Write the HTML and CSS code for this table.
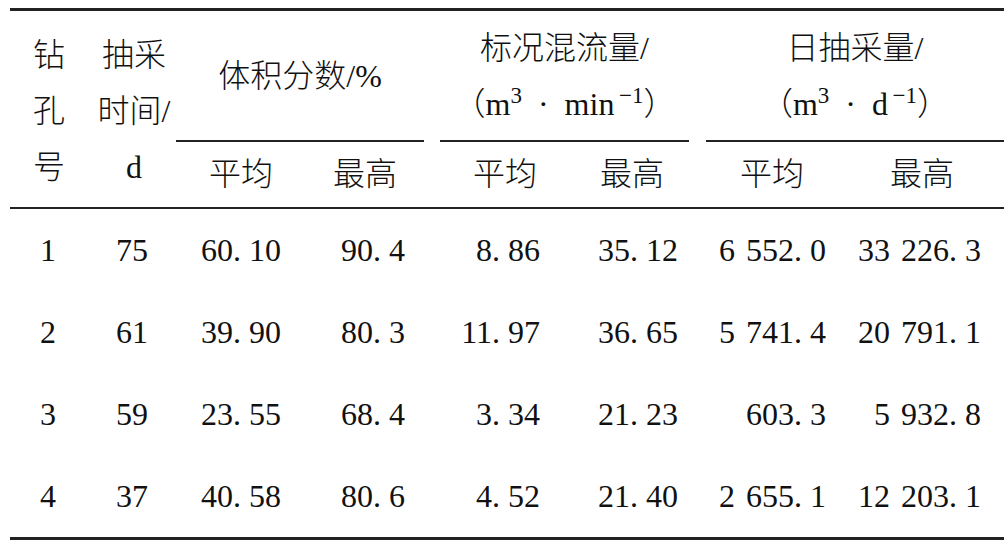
FILE: index.html
```html
<!DOCTYPE html>
<html lang="zh-CN">
<head>
<meta charset="utf-8">
<title>钻孔抽采数据</title>
<link rel="stylesheet" href="styles.css">
</head>
<body>
<table class="data">
  <colgroup>
    <col class="w1"><col class="w2"><col class="w3"><col class="w4">
    <col class="w5"><col class="w6"><col class="w7"><col class="w8">
  </colgroup>
  <thead>
    <tr>
      <th rowspan="2" class="stack">钻<br>孔<br>号</th>
      <th rowspan="2" class="stack stack-2">抽采<br>时间/<br>d</th>
      <th colspan="2" class="group"><div class="glabel g-first"><span>体积分数/<span class="pct">%</span></span></div></th>
      <th colspan="2" class="group"><div class="glabel g-mid"><span>标况混流量/</span><span class="unit">（m<sup>3</sup> · min<sup class="neg">−1</sup>）</span></div></th>
      <th colspan="2" class="group"><div class="glabel g-last"><span>日抽采量/</span><span class="unit">（m<sup>3</sup> · d<sup class="neg">−1</sup>）</span></div></th>
    </tr>
    <tr>
      <th class="sub s3">平均</th>
      <th class="sub s4">最高</th>
      <th class="sub s5">平均</th>
      <th class="sub s6">最高</th>
      <th class="sub s7">平均</th>
      <th class="sub s8">最高</th>
    </tr>
  </thead>
  <tbody>
    <tr>
      <td class="c1">1</td><td class="c2">75</td>
      <td class="c3">60<span class="pt">.</span>10</td><td class="c4">90<span class="pt">.</span>4</td>
      <td class="c5">8<span class="pt">.</span>86</td><td class="c6">35<span class="pt">.</span>12</td>
      <td class="c7">6 552<span class="pt">.</span>0</td><td class="c8">33 226<span class="pt">.</span>3</td>
    </tr>
    <tr>
      <td class="c1">2</td><td class="c2">61</td>
      <td class="c3">39<span class="pt">.</span>90</td><td class="c4">80<span class="pt">.</span>3</td>
      <td class="c5">11<span class="pt">.</span>97</td><td class="c6">36<span class="pt">.</span>65</td>
      <td class="c7">5 741<span class="pt">.</span>4</td><td class="c8">20 791<span class="pt">.</span>1</td>
    </tr>
    <tr>
      <td class="c1">3</td><td class="c2">59</td>
      <td class="c3">23<span class="pt">.</span>55</td><td class="c4">68<span class="pt">.</span>4</td>
      <td class="c5">3<span class="pt">.</span>34</td><td class="c6">21<span class="pt">.</span>23</td>
      <td class="c7">603<span class="pt">.</span>3</td><td class="c8">5 932<span class="pt">.</span>8</td>
    </tr>
    <tr>
      <td class="c1">4</td><td class="c2">37</td>
      <td class="c3">40<span class="pt">.</span>58</td><td class="c4">80<span class="pt">.</span>6</td>
      <td class="c5">4<span class="pt">.</span>52</td><td class="c6">21<span class="pt">.</span>40</td>
      <td class="c7">2 655<span class="pt">.</span>1</td><td class="c8">12 203<span class="pt">.</span>1</td>
    </tr>
  </tbody>
</table>
</body>
</html>
```

FILE: styles.css
```css
html, body {
  margin: 0;
  padding: 0;
  background: #ffffff;
}

body {
  padding-top: 8px;
  padding-left: 10px;
}

.data {
  width: 994px;
  table-layout: fixed;
  border-collapse: separate;
  border-spacing: 0;
  border-top: 3px solid #222;
  border-bottom: 3px solid #222;
  font-family: "Liberation Serif", "Noto Sans CJK SC", serif;
  font-size: 32px;
  font-weight: 300;
  color: #111;
}

.w1 { width: 82px; }
.w2 { width: 84px; }
.w3 { width: 126px; }
.w4 { width: 130px; }
.w5 { width: 130px; }
.w6 { width: 136px; }
.w7 { width: 142px; }
.w8 { width: 164px; }

th {
  font-weight: 300;
  padding: 0;
  text-align: center;
  white-space: nowrap;
}

.stack {
  line-height: 56px;
  vertical-align: middle;
  border-bottom: 2px solid #222;
  padding-right: 4px;
  padding-top: 4px;
}

.stack-2 {
  padding-right: 0;
}

.group {
  vertical-align: bottom;
}

.glabel {
  height: 129px;
  border-bottom: 2px solid #222;
  display: flex;
  flex-direction: column;
  justify-content: center;
  align-items: center;
  line-height: 56px;
}

.g-first { margin-right: 8px; }
.g-mid { margin-left: 8px; margin-right: 9px; }
.g-last { margin-left: 8px; }

.pct {
  font-family: "Liberation Serif", serif;
}

.unit {
  word-spacing: 8px;
}

.unit sup {
  font-size: 0.72em;
  vertical-align: 0.5em;
  line-height: 0;
}

.unit .neg {
  margin-left: 0.2em;
}

.sub {
  line-height: 65px;
  border-bottom: 2px solid #222;
}

.s3 { padding-left: 4px; }
.s4 { padding-right: 4px; }
.s5 { padding-left: 16px; }
.s6 { padding-left: 4px; }
.s7 { padding-left: 6px; }

td {
  padding: 0;
  line-height: 82px;
  text-align: right;
  white-space: nowrap;
  word-spacing: 3px;
}

.pt {
  margin-right: 0.25em;
}

.c1 { text-align: center; padding-right: 6px; }
.c2 { text-align: center; padding-right: 4px; }
.c3 { padding-right: 21px; }
.c4 { padding-right: 27px; }
.c5 { padding-right: 22px; }
.c6 { padding-right: 20px; }
.c7 { padding-right: 14px; }
.c8 { padding-right: 23px; }
```
